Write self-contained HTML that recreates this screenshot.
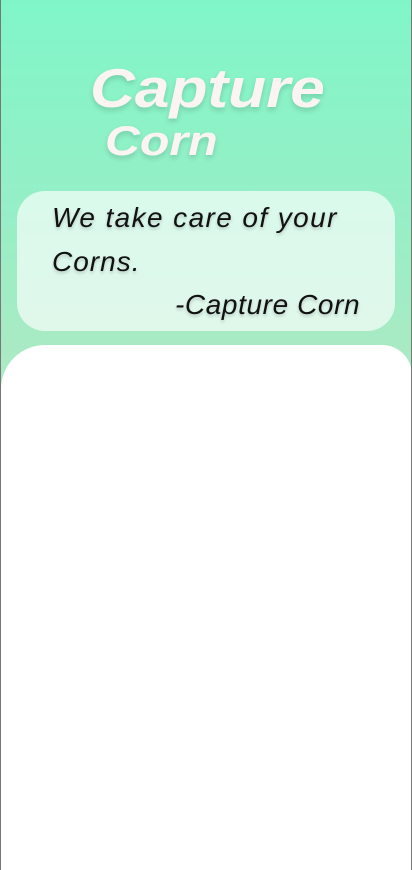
<!DOCTYPE html>
<html><head><meta charset="utf-8"><style>
html,body{margin:0;padding:0}
body{width:412px;height:870px;overflow:hidden;position:relative;background:linear-gradient(#80f6c8 0px,#95efc6 200px,#aaeac4 360px);font-family:"Liberation Sans",sans-serif}
.b{position:absolute;top:0;bottom:0;width:1px;background:#777}
.t1,.t2{position:absolute;color:#fcf4f2;font-weight:bold;font-style:italic;text-shadow:0 3px 5px rgba(0,0,0,0.15);white-space:nowrap;transform-origin:0 0}
.t1{left:90px;top:56px;font-size:55px;line-height:64px;transform:scaleX(1.13)}
.t2{left:105px;top:117px;font-size:42px;line-height:48px;transform:scaleX(1.15)}
.q{position:absolute;left:17px;top:191px;width:378px;height:140px;border-radius:28px;background:rgba(255,255,255,0.65)}
.q div{position:absolute;font-style:italic;font-size:28px;color:#111;text-shadow:0 2px 3px rgba(0,0,0,0.2);white-space:nowrap}
.w{position:absolute;left:1px;right:0;top:345px;bottom:0;background:#fff;border-radius:44px 30px 0 0}
</style></head><body>
<div class="t1">Capture</div>
<div class="t2">Corn</div>
<div class="q">
<div style="left:35px;top:11px;letter-spacing:1.4px">We take care of your</div>
<div style="left:35px;top:55px;letter-spacing:1px">Corns.</div>
<div style="left:158px;top:98px;letter-spacing:0.6px">-Capture Corn</div>
</div>
<div class="w"></div>
<div class="b" style="left:0"></div><div class="b" style="right:0"></div>
</body></html>
